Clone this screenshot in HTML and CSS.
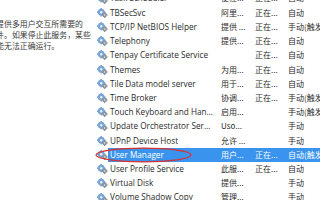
FILE: index.html
```html
<!DOCTYPE html>
<html lang="zh-CN">
<head>
<meta charset="utf-8">
<title>服务</title>
<link rel="stylesheet" href="styles.css">
</head>
<body>
<div class="window">
  <aside class="desc-pane">
    <div class="desc-text">
      <p class="desc-line">提供多用户交互所需要的</p>
      <p class="desc-line">件。如果停止此服务，某些</p>
      <p class="desc-line">能无法正确运行。</p>
    </div>
  </aside>
  <main class="list">
    <div class="row"><span class="ico"><svg viewBox="0 0 11 10" class="gear"><use href="#g"/></svg></span><div class="cells"><span class="c-name">Task Scheduler</span><span class="c-desc">使任...</span><span class="c-stat">正在...</span><span class="c-start">自动</span></div></div>
    <div class="row"><span class="ico"><svg viewBox="0 0 11 10" class="gear"><use href="#g"/></svg></span><div class="cells"><span class="c-name">TBSecSvc</span><span class="c-desc">阿里...</span><span class="c-stat">正在...</span><span class="c-start">自动</span></div></div>
    <div class="row"><span class="ico"><svg viewBox="0 0 11 10" class="gear"><use href="#g"/></svg></span><div class="cells"><span class="c-name">TCP/IP NetBIOS Helper</span><span class="c-desc">提供 ...</span><span class="c-stat">正在...</span><span class="c-start">手动(触发</span></div></div>
    <div class="row"><span class="ico"><svg viewBox="0 0 11 10" class="gear"><use href="#g"/></svg></span><div class="cells"><span class="c-name">Telephony</span><span class="c-desc">提供...</span><span class="c-stat">正在...</span><span class="c-start">自动</span></div></div>
    <div class="row"><span class="ico"><svg viewBox="0 0 11 10" class="gear"><use href="#g"/></svg></span><div class="cells"><span class="c-name">Tenpay Certificate Service</span><span class="c-desc"></span><span class="c-stat">正在...</span><span class="c-start">自动</span></div></div>
    <div class="row"><span class="ico"><svg viewBox="0 0 11 10" class="gear"><use href="#g"/></svg></span><div class="cells"><span class="c-name">Themes</span><span class="c-desc">为用...</span><span class="c-stat">正在...</span><span class="c-start">自动</span></div></div>
    <div class="row"><span class="ico"><svg viewBox="0 0 11 10" class="gear"><use href="#g"/></svg></span><div class="cells"><span class="c-name">Tile Data model server</span><span class="c-desc">用于...</span><span class="c-stat">正在...</span><span class="c-start">自动</span></div></div>
    <div class="row"><span class="ico"><svg viewBox="0 0 11 10" class="gear"><use href="#g"/></svg></span><div class="cells"><span class="c-name">Time Broker</span><span class="c-desc">协调...</span><span class="c-stat">正在...</span><span class="c-start">手动(触发</span></div></div>
    <div class="row"><span class="ico"><svg viewBox="0 0 11 10" class="gear"><use href="#g"/></svg></span><div class="cells"><span class="c-name">Touch Keyboard and Handwriting Panel Service</span><span class="c-desc">启用...</span><span class="c-stat"></span><span class="c-start">手动(触发</span></div></div>
    <div class="row"><span class="ico"><svg viewBox="0 0 11 10" class="gear"><use href="#g"/></svg></span><div class="cells"><span class="c-name">Update Orchestrator Service</span><span class="c-desc">Uso...</span><span class="c-stat"></span><span class="c-start">手动</span></div></div>
    <div class="row"><span class="ico"><svg viewBox="0 0 11 10" class="gear"><use href="#g"/></svg></span><div class="cells"><span class="c-name">UPnP Device Host</span><span class="c-desc">允许 ...</span><span class="c-stat"></span><span class="c-start">手动</span></div></div>
    <div class="row selected"><span class="ico"><svg viewBox="0 0 11 10" class="gear"><use href="#g"/></svg></span><div class="cells"><span class="c-name">User Manager</span><span class="c-desc">用户...</span><span class="c-stat">正在...</span><span class="c-start">自动(触发</span></div><svg class="circle" viewBox="0 0 100 16" preserveAspectRatio="none"><ellipse cx="50" cy="8" rx="49" ry="6.8"/></svg></div>
    <div class="row"><span class="ico"><svg viewBox="0 0 11 10" class="gear"><use href="#g"/></svg></span><div class="cells"><span class="c-name">User Profile Service</span><span class="c-desc">此服...</span><span class="c-stat">正在...</span><span class="c-start">自动</span></div></div>
    <div class="row"><span class="ico"><svg viewBox="0 0 11 10" class="gear"><use href="#g"/></svg></span><div class="cells"><span class="c-name">Virtual Disk</span><span class="c-desc">提供...</span><span class="c-stat"></span><span class="c-start">手动</span></div></div>
    <div class="row"><span class="ico"><svg viewBox="0 0 11 10" class="gear"><use href="#g"/></svg></span><div class="cells"><span class="c-name">Volume Shadow Copy</span><span class="c-desc">管理...</span><span class="c-stat"></span><span class="c-start">手动</span></div></div>
  </main>
</div>
<svg class="defs" width="0" height="0" aria-hidden="true">
  <defs>
    <g id="g">
      <circle cx="4.2" cy="4.2" r="3.4" fill="#78a6d6"/>
      <g fill="#78a6d6">
        <rect x="3.4" y="0" width="1.6" height="1.6"/>
        <rect x="3.4" y="6.8" width="1.6" height="1.6"/>
        <rect x="0" y="3.4" width="1.6" height="1.6"/>
        <rect x="6.8" y="3.4" width="1.6" height="1.6"/>
      </g>
      <circle cx="4.2" cy="4.2" r="1.2" fill="#e8f0fa"/>
      <circle cx="7.6" cy="7" r="2.4" fill="#8c939c"/>
      <g fill="#8c939c">
        <rect x="7" y="3.9" width="1.2" height="1.3"/>
        <rect x="7" y="8.8" width="1.2" height="1.2"/>
        <rect x="4.6" y="6.4" width="1.3" height="1.2"/>
        <rect x="9.4" y="6.4" width="1.3" height="1.2"/>
      </g>
      <circle cx="7.6" cy="7" r="0.8" fill="#e6e6e6"/>
    </g>
  </defs>
</svg>
</body>
</html>
```
FILE: styles.css
```css
html, body {
  margin: 0;
  padding: 0;
  background: #ffffff;
  overflow: hidden;
}

.window {
  display: flex;
  width: 320px;
  height: 200px;
  overflow: hidden;
  background: #ffffff;
}

.desc-pane {
  width: 95px;
  flex: none;
  overflow: hidden;
  padding-top: 18px;
  box-sizing: border-box;
}

.desc-text {
  margin-left: -3.9px;
  font-family: "Noto Sans CJK SC", "Noto Sans", sans-serif;
  font-size: 7.9px;
  line-height: 11px;
  color: #3a3a3a;
}

.desc-line {
  margin: 0;
  white-space: nowrap;
}

.list {
  flex: 1;
  margin-top: -8.6px;
  font-family: "Open Sans", "Noto Sans CJK SC", sans-serif;
  font-size: 8.2px;
  color: #2a2a2a;
}

.row {
  position: relative;
  display: flex;
  height: 14.22px;
  line-height: 14.22px;
}

.ico {
  width: 13px;
  flex: none;
  display: flex;
  align-items: center;
  padding-left: 2px;
  box-sizing: border-box;
}

.gear {
  width: 11px;
  height: 10px;
}

.cells {
  flex: 1;
  display: flex;
  white-space: nowrap;
}

.c-name {
  width: 110px;
  padding-left: 2px;
  padding-right: 4px;
  box-sizing: border-box;
  overflow: hidden;
  text-overflow: ellipsis;
}

.c-desc, .c-stat, .c-start {
  font-family: "Noto Sans CJK SC", "Open Sans", sans-serif;
  font-size: 8px;
  overflow: hidden;
  box-sizing: border-box;
}

.c-desc {
  width: 34px;
  padding-left: 3px;
}

.c-stat {
  width: 34px;
  padding-left: 3px;
}

.c-start {
  flex: 1;
  padding-left: 2px;
}

.selected .cells {
  background: #3a94ee;
  color: #ffffff;
}

.circle {
  position: absolute;
  left: 0;
  top: -1px;
  width: 97px;
  height: 16px;
  overflow: visible;
  fill: none;
  stroke: #d9302f;
  stroke-width: 1.2px;
  vector-effect: non-scaling-stroke;
}

.defs {
  position: absolute;
  width: 0;
  height: 0;
}
```
